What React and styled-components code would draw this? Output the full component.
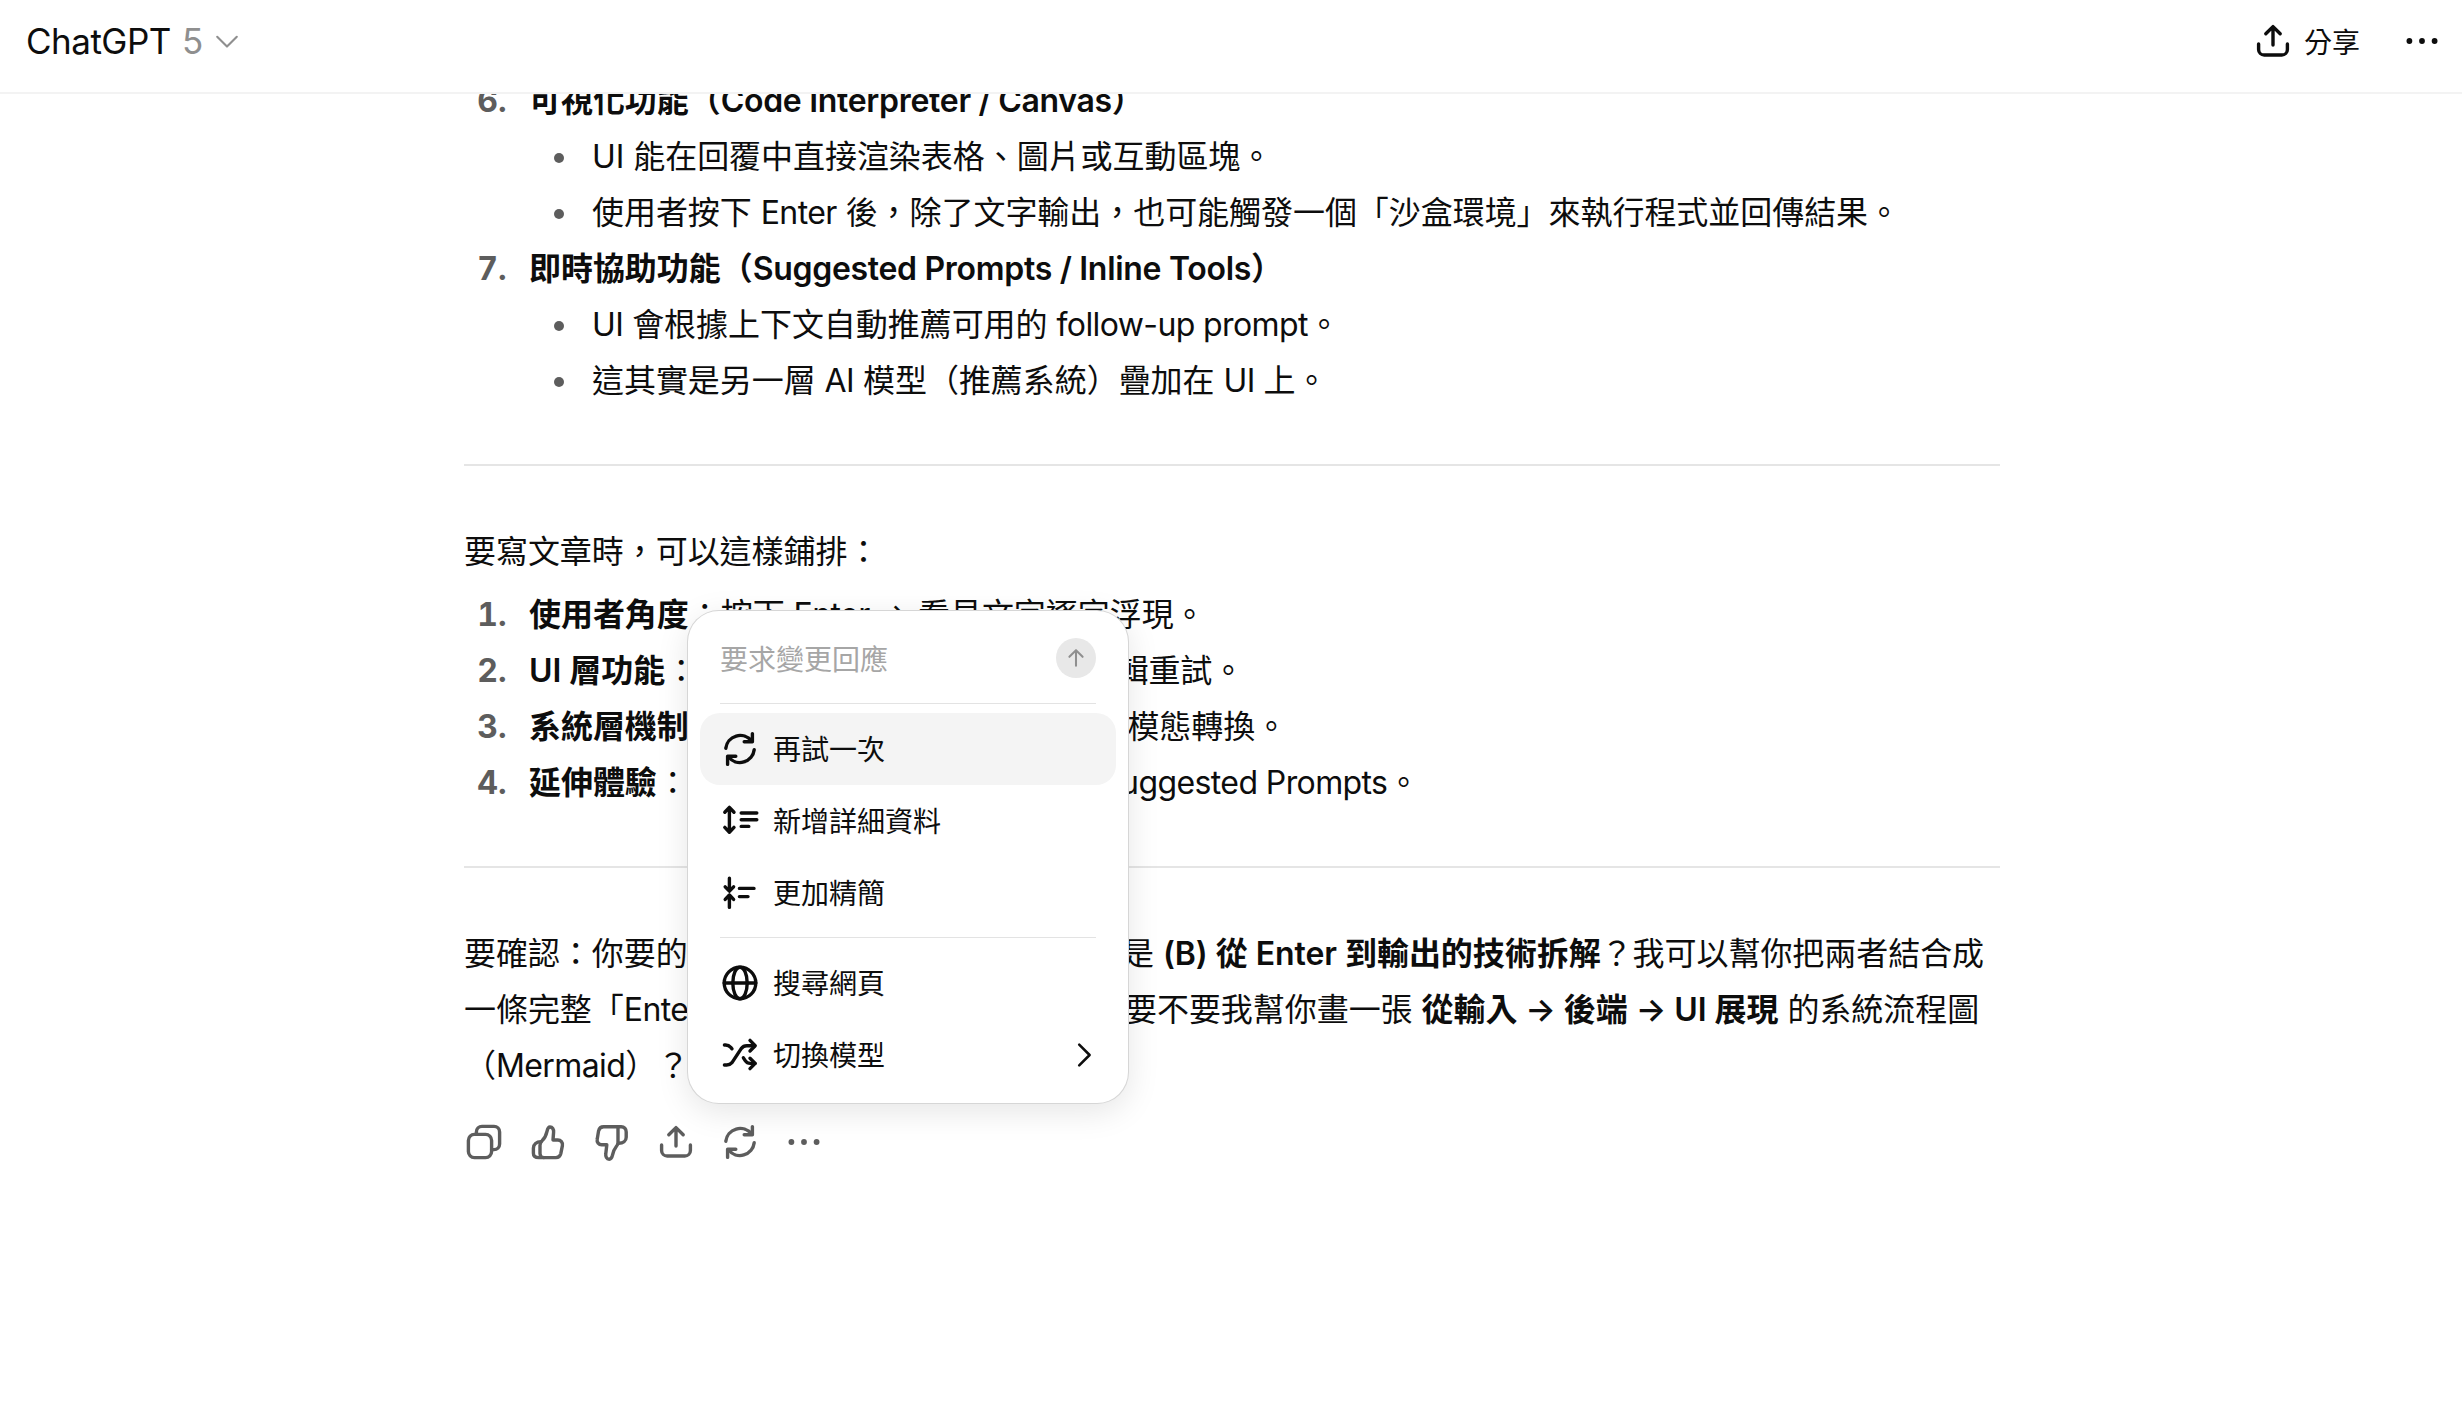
import React from 'react';
import styled, { createGlobalStyle } from 'styled-components';

const GlobalStyle = createGlobalStyle`
  html, body {
    margin: 0;
    padding: 0;
    height: 100%;
    background: #fff;
    color: #0d0d0d;
    font-family: Inter, "Noto Sans CJK TC", sans-serif;
  }
`;

const Page = styled.div`
  position: relative;
  display: flex;
  flex-direction: column;
  height: 100vh;
  overflow: hidden;
`;

const Header = styled.header`
  flex: none;
  box-sizing: border-box;
  display: flex;
  align-items: center;
  justify-content: space-between;
  height: 94px;
  padding: 0 20px 10px 26px;
  border-bottom: 2px solid #f3f3f3;
  background: #fff;
  z-index: 1;
`;

const ModelPicker = styled.div`
  display: flex;
  align-items: center;
  font-size: 35px;
  letter-spacing: -0.5px;
`;

const ModelVersion = styled.span`
  margin-left: 11px;
  color: #8f8f8f;
`;

const HeaderActions = styled.div`
  display: flex;
  align-items: center;
`;

const ShareButton = styled.div`
  display: flex;
  align-items: center;
  gap: 11px;
  font-size: 28px;
  margin-right: 42px;
`;

const Main = styled.main`
  flex: 1;
  overflow: hidden;
`;

const Article = styled.article`
  width: 1536px;
  margin: -21px 0 0 464px;
  font-size: 32px;
  line-height: 56px;
  letter-spacing: -0.05px;
`;

const NumberList = styled.ol`
  margin: ${(p) => (p.$flush ? '0' : '7px 0 0')};
  padding: 0 0 0 51px;
`;

const NumberItem = styled.li`
  padding-left: 14px;

  &::marker {
    color: #5d5d5d;
    font-weight: 700;
  }
`;

const BulletList = styled.ul`
  margin: 0;
  padding: 0 0 0 52px;
  list-style-type: disc;
`;

const BulletItem = styled.li`
  padding-left: 11px;

  &::marker {
    color: #5d5d5d;
  }
`;

const Rule = styled.hr`
  height: 2px;
  margin: 55px 0 58px;
  border: 0;
  background: #e5e5e5;
`;

const Paragraph = styled.p`
  margin: 0;
`;

const Strong = styled.strong`
  font-weight: 600;
`;

// Inter runs wider than the reference's latin face, so latin words get tightened
const Latin = styled.span`
  letter-spacing: ${(p) => (p.$bold ? '-0.3px' : '-0.6px')};
`;

const ActionBar = styled.div`
  display: flex;
  margin: 16px 0 0 -12px;
  color: #5d5d5d;
`;

const ActionButton = styled.div`
  display: flex;
  align-items: center;
  justify-content: center;
  width: 64px;
  height: 64px;
`;

const Popover = styled.div`
  position: absolute;
  left: 687px;
  top: 610px;
  box-sizing: border-box;
  width: 442px;
  height: 494px;
  padding: 0 12px;
  border: 1px solid rgba(0, 0, 0, 0.16);
  border-radius: 32px;
  background: #fff;
  box-shadow: 0 8px 32px rgba(0, 0, 0, 0.1);
  z-index: 2;
`;

const PromptRow = styled.div`
  box-sizing: border-box;
  display: flex;
  align-items: center;
  justify-content: space-between;
  height: 92px;
  padding: 2px 20px 0;
  font-size: 28px;
  color: #a6a6a6;
`;

const SendButton = styled.div`
  display: flex;
  align-items: center;
  justify-content: center;
  width: 40px;
  height: 40px;
  border-radius: 50%;
  background: #e8e8e8;
  color: #8f8f8f;
`;

const MenuRule = styled.div`
  height: 1px;
  margin: ${(p) => (p.$loose ? '8px 20px 9px' : '0 20px 9px')};
  background: #e3e3e3;
`;

const MenuItem = styled.div`
  display: flex;
  align-items: center;
  gap: 13px;
  height: 72px;
  padding: 0 16px 0 20px;
  border-radius: 20px;
  font-size: 28px;
  background: ${(p) => (p.$active ? '#f4f4f4' : 'transparent')};
`;

const MenuLabel = styled.span`
  flex: 1;
  margin-top: -2px;
`;

const Icon = ({ size = 40, children, width = 1.7 }) => (
  <svg
    width={size}
    height={size}
    viewBox="0 0 20 20"
    fill="none"
    stroke="currentColor"
    strokeWidth={width}
    strokeLinecap="round"
    strokeLinejoin="round"
  >
    {children}
  </svg>
);

const ShareIcon = () => (
  <Icon>
    <path d="M10 12V3M6.4 6.4 10 2.8l3.6 3.6" />
    <path d="M2.8 11.5v2.7A2.8 2.8 0 0 0 5.6 17h8.8a2.8 2.8 0 0 0 2.8-2.8v-2.7" />
  </Icon>
);

const DotsIcon = () => (
  <svg width="40" height="40" viewBox="0 0 20 20" fill="currentColor">
    <circle cx="3.7" cy="10" r="1.45" />
    <circle cx="10" cy="10" r="1.45" />
    <circle cx="16.3" cy="10" r="1.45" />
  </svg>
);

const CopyIcon = () => (
  <Icon>
    <rect x="2.2" y="6.2" width="11.6" height="11.6" rx="3" />
    <path d="M6.2 6.2V5a2.8 2.8 0 0 1 2.8-2.8h6a2.8 2.8 0 0 1 2.8 2.8v6a2.8 2.8 0 0 1-2.8 2.8h-1.2" />
  </Icon>
);

const ThumbUpIcon = () => (
  <Icon>
    <path d="M6 11.6c0-.9.4-1.6 1.1-2.3 1.2-1.1 2-2.8 2.4-4.6.2-1 .6-2.2 1.5-2.2 1.2 0 1.9 1.2 1.8 2.6l-.3 3.9h2.4c1.5 0 2.6 1.3 2.3 2.8l-.8 4c-.3 1.2-1.2 2-2.4 2H8c-1.2 0-2-.9-2-2.1z" />
    <path d="M6.4 9.9c-2.1 0-3.7 1.3-3.7 3.2v2.5c0 1.4 1 2.2 2.7 2.2H8" />
  </Icon>
);

const ThumbDownIcon = () => (
  <Icon>
    <path d="M13 2.4H5.8c-1.2 0-2.2.8-2.5 2L2.6 8.6c-.3 1.5.8 2.8 2.2 2.8h2.6l-.5 4.4c-.2 1.4.4 2.8 1.7 2.8.9 0 1.4-1 1.6-1.9.3-1.6.8-3 1.8-4.2.6-.7 1-1.4 1-2.3z" />
    <path d="M13 2.4h1.6c1.5 0 2.5 1.1 2.5 2.6v2.6c0 1.9-1.6 3-3.7 3" />
  </Icon>
);

const RetryIcon = () => (
  <Icon>
    <path d="M2.9 9.6A7.2 7.2 0 0 1 15.7 6" />
    <path d="M16.2 2.3v4.1h-4.1" />
    <path d="M17.1 10.4A7.2 7.2 0 0 1 4.3 14" />
    <path d="M3.8 17.7v-4.1h4.1" />
  </Icon>
);

const DetailIcon = () => (
  <Icon>
    <path d="M4.7 3.4v12M2.4 5.6l2.3-2.4L7 5.6M2.4 13.2l2.3 2.4L7 13.2" />
    <path d="M10.6 6h7.8M10.6 9.4h7.8M10.6 12.7h3.8" />
  </Icon>
);

const ConciseIcon = () => (
  <Icon>
    <path d="M4.7 2.6V9M2.6 6.9l2.1 2.2 2.1-2.2M4.7 17.2v-6.2M2.6 13.2 4.7 11l2.1 2.2" />
    <path d="M9.7 7.7H17M9.7 11.8H14" />
  </Icon>
);

const GlobeIcon = () => (
  <Icon>
    <circle cx="10" cy="10" r="7.9" />
    <path d="M2.1 10h15.8" />
    <ellipse cx="10" cy="10" rx="3.6" ry="7.9" />
  </Icon>
);

const SwitchIcon = () => (
  <Icon>
    <path d="M2.2 5h.6c1 0 1.9.4 2.6 1.2l.6.7" />
    <path d="M2.2 15h1.2c1 0 1.9-.4 2.6-1.2l4.6-7c.7-.9 1.7-1.4 2.8-1.4h3.9" />
    <path d="M11.7 11.4l.9 1.4c.6.9 1.5 1.4 2.5 1.4h2.4" />
    <path d="M15 2.7l2.6 2.7L15 8M15 11.6l2.6 2.6-2.6 2.6" />
  </Icon>
);

const UpArrowIcon = () => (
  <Icon size={24}>
    <path d="M10 16.5V3.5M4.5 9 10 3.5 15.5 9" />
  </Icon>
);

const App = () => (
  <Page>
    <GlobalStyle />
    <Header>
      <ModelPicker>
        ChatGPT
        <ModelVersion>5</ModelVersion>
        <svg width="28" height="28" viewBox="0 0 20 20" fill="none" stroke="#8f8f8f" strokeWidth="1.5" strokeLinecap="round" strokeLinejoin="round" style={{ marginLeft: 10 }}>
          <path d="M3 7l7 7 7-7" />
        </svg>
      </ModelPicker>
      <HeaderActions>
        <ShareButton>
          <ShareIcon />
          分享
        </ShareButton>
        <DotsIcon />
      </HeaderActions>
    </Header>
    <Main>
      <Article>
        <NumberList $flush start={6}>
          <NumberItem>
            <Strong>可視化功能（<Latin $bold>Code Interpreter / Canvas</Latin>）</Strong>
            <BulletList>
              <BulletItem>UI 能在回覆中直接渲染表格、圖片或互動區塊。</BulletItem>
              <BulletItem>使用者按下 <Latin>Enter</Latin> 後，除了文字輸出，也可能觸發一個「沙盒環境」來執行程式並回傳結果。</BulletItem>
            </BulletList>
          </NumberItem>
          <NumberItem>
            <Strong>即時協助功能（<Latin $bold>Suggested Prompts / Inline Tools</Latin>）</Strong>
            <BulletList>
              <BulletItem><Latin>UI</Latin> 會根據上下文自動推薦可用的 <Latin>follow-up prompt</Latin>。</BulletItem>
              <BulletItem>這其實是另一層 <Latin>AI</Latin> 模型（推薦系統）疊加在 <Latin>UI</Latin> 上。</BulletItem>
            </BulletList>
          </NumberItem>
        </NumberList>
        <Rule />
        <Paragraph>要寫文章時，可以這樣鋪排：</Paragraph>
        <NumberList>
          <NumberItem><Strong>使用者角度</Strong>：按下 <Latin>Enter</Latin> → 看見文字逐字浮現。</NumberItem>
          <NumberItem><Strong>UI 層功能</Strong>：串流、<Latin>Markdown</Latin> 排版、可編輯重試。</NumberItem>
          <NumberItem><Strong>系統層機制</Strong>：<Latin>後端 API、Token 串流、與</Latin>多模態轉換。</NumberItem>
          <NumberItem><Strong>延伸體驗</Strong>：<Latin>Canvas、Code Interpreter、Suggested Prompts</Latin>。</NumberItem>
        </NumberList>
        <Rule />
        <Paragraph>
          要確認：你要的文章是偏向<Latin>(A) 體驗</Latin>的敘事，還是 <Strong>(B) 從 Enter 到輸出的技術拆解</Strong>？我可以幫你把兩者結合成一條完整「<Latin>Enter</Latin> → 輸出 → 介面」 的故事線。要不要我幫你畫一張 <Strong>從輸入 → 後端 → UI 展現</Strong> 的系統流程圖（<Latin>Mermaid</Latin>）？
        </Paragraph>
        <ActionBar>
          <ActionButton><CopyIcon /></ActionButton>
          <ActionButton><ThumbUpIcon /></ActionButton>
          <ActionButton><ThumbDownIcon /></ActionButton>
          <ActionButton><ShareIcon /></ActionButton>
          <ActionButton><RetryIcon /></ActionButton>
          <ActionButton><DotsIcon /></ActionButton>
        </ActionBar>
      </Article>
    </Main>
    <Popover>
      <PromptRow>
        要求變更回應
        <SendButton><UpArrowIcon /></SendButton>
      </PromptRow>
      <MenuRule />
      <MenuItem $active><RetryIcon /><MenuLabel>再試一次</MenuLabel></MenuItem>
      <MenuItem><DetailIcon /><MenuLabel>新增詳細資料</MenuLabel></MenuItem>
      <MenuItem><ConciseIcon /><MenuLabel>更加精簡</MenuLabel></MenuItem>
      <MenuRule $loose />
      <MenuItem><GlobeIcon /><MenuLabel>搜尋網頁</MenuLabel></MenuItem>
      <MenuItem>
        <SwitchIcon />
        <MenuLabel>切換模型</MenuLabel>
        <svg width="32" height="32" viewBox="0 0 20 20" fill="none" stroke="currentColor" strokeWidth="1.6" strokeLinecap="round" strokeLinejoin="round">
          <path d="M7 3.5 13.5 10 7 16.5" />
        </svg>
      </MenuItem>
    </Popover>
  </Page>
);

export default App;
